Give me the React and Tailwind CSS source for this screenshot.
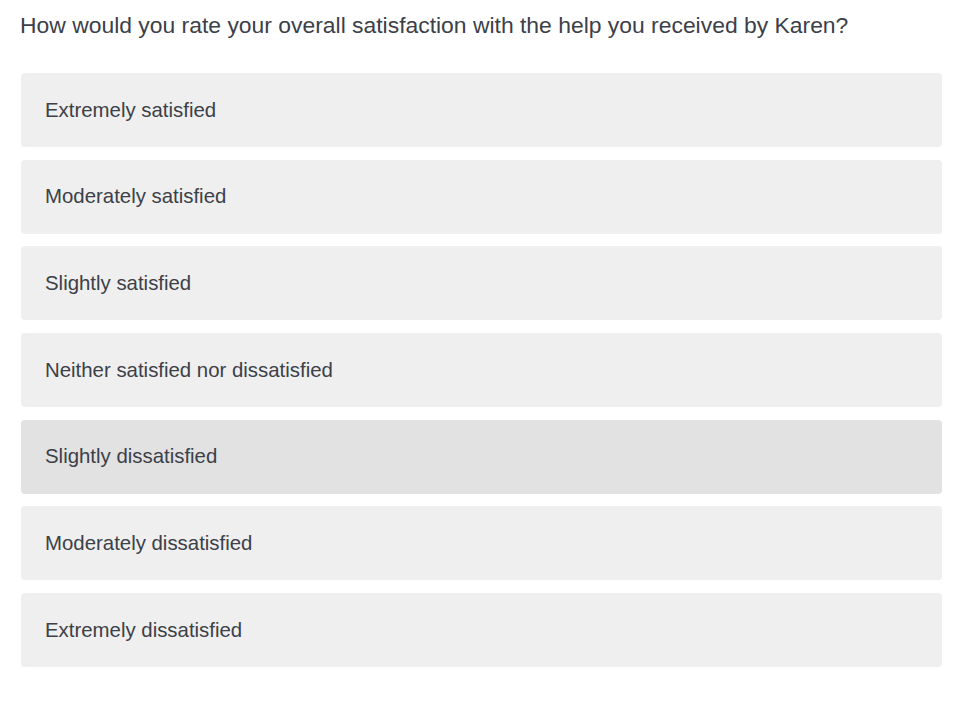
const options = [
  "Extremely satisfied",
  "Moderately satisfied",
  "Slightly satisfied",
  "Neither satisfied nor dissatisfied",
  "Slightly dissatisfied",
  "Moderately dissatisfied",
  "Extremely dissatisfied",
];

export default function App() {
  return (
    <div
      className="min-h-[711px] bg-white pl-[20px] pr-[32px] pt-[10px] text-[#3c4048]"
      style={{fontFamily: '"Liberation Sans", Arial, sans-serif'}}
    >
      <h1 className="text-[22.9px] leading-[31px]">
        How would you rate your overall satisfaction with the help you received by Karen?
      </h1>
      <div className="ml-px mt-[32px] flex flex-col gap-[12.67px]">
        {options.map((opt) => (
          <div
            key={opt}
            className={`flex h-[74px] items-center rounded-[4px] pl-[24px] text-[20.4px] ${
              opt === "Slightly dissatisfied" ? "bg-[#e2e2e2]" : "bg-[#efefef]"
            }`}
          >
            {opt}
          </div>
        ))}
      </div>
    </div>
  );
}
